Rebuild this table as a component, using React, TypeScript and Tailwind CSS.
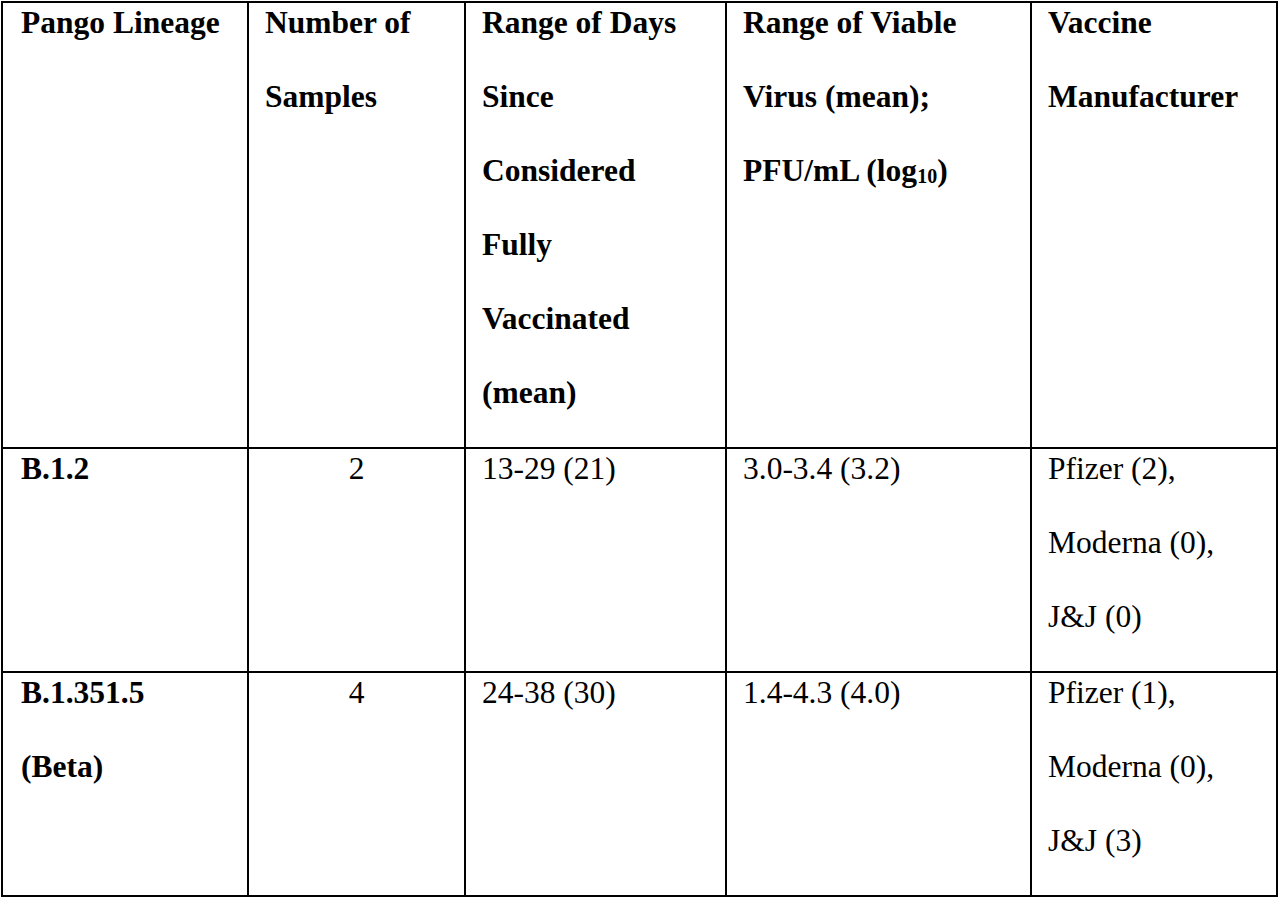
const header = [
  ['Pango Lineage'],
  ['Number of', 'Samples'],
  ['Range of Days', 'Since', 'Considered', 'Fully', 'Vaccinated', '(mean)'],
  ['Range of Viable', 'Virus (mean);', 'PFU/mL (log10)'],
  ['Vaccine', 'Manufacturer'],
]

const rows = [
  {
    lineage: ['B.1.2'],
    samples: '2',
    days: '13-29 (21)',
    virus: '3.0-3.4 (3.2)',
    vaccine: ['Pfizer (2),', 'Moderna (0),', 'J&J (0)'],
  },
  {
    lineage: ['B.1.351.5', '(Beta)'],
    samples: '4',
    days: '24-38 (30)',
    virus: '1.4-4.3 (4.0)',
    vaccine: ['Pfizer (1),', 'Moderna (0),', 'J&J (3)'],
  },
]

function Lines({ lines, center = false }: { lines: string[]; center?: boolean }) {
  return (
    <div className={`-mt-[17px] leading-[74px] whitespace-nowrap ${center ? 'text-center' : ''}`}>
      {lines.map((l) => (
        <div key={l}>
          {l.endsWith('(log10)') ? (
            <>
              PFU/mL (log<span className="text-[20px] align-[-2px]">10</span>)
            </>
          ) : (
            l
          )}
        </div>
      ))}
    </div>
  )
}

function Cell({ children, center = false, first = false }: { children: React.ReactNode; center?: boolean; first?: boolean }) {
  return (
    <div
      className={`border-r-2 border-b-2 border-black overflow-hidden ${
        center ? 'px-2' : first ? 'pl-[18px] pr-2' : 'pl-[16px] pr-2'
      }`}
    >
      {children}
    </div>
  )
}

export default function App() {
  return (
    <div className="w-[1280px] h-[899px] bg-white text-black font-['Liberation_Serif','Times_New_Roman',serif]">
      <div className="ml-[1px] pt-[1px]">
        <div className="grid grid-cols-[246px_217px_261px_305px_246px] grid-rows-[446px_224px_224px] w-max border-l-2 border-t-2 border-black text-[31.5px]">
          {header.map((h, i) => (
            <Cell key={i} first={i === 0}>
              <div className="font-bold">
                <Lines lines={h} />
              </div>
            </Cell>
          ))}
          {rows.map((r) => (
            <>
              <Cell key={r.lineage[0] + 'a'} first>
                <div className="font-bold">
                  <Lines lines={r.lineage} />
                </div>
              </Cell>
              <Cell key={r.lineage[0] + 'b'} center>
                <Lines lines={[r.samples]} center />
              </Cell>
              <Cell key={r.lineage[0] + 'c'}>
                <Lines lines={[r.days]} />
              </Cell>
              <Cell key={r.lineage[0] + 'd'}>
                <Lines lines={[r.virus]} />
              </Cell>
              <Cell key={r.lineage[0] + 'e'}>
                <Lines lines={r.vaccine} />
              </Cell>
            </>
          ))}
        </div>
      </div>
    </div>
  )
}
